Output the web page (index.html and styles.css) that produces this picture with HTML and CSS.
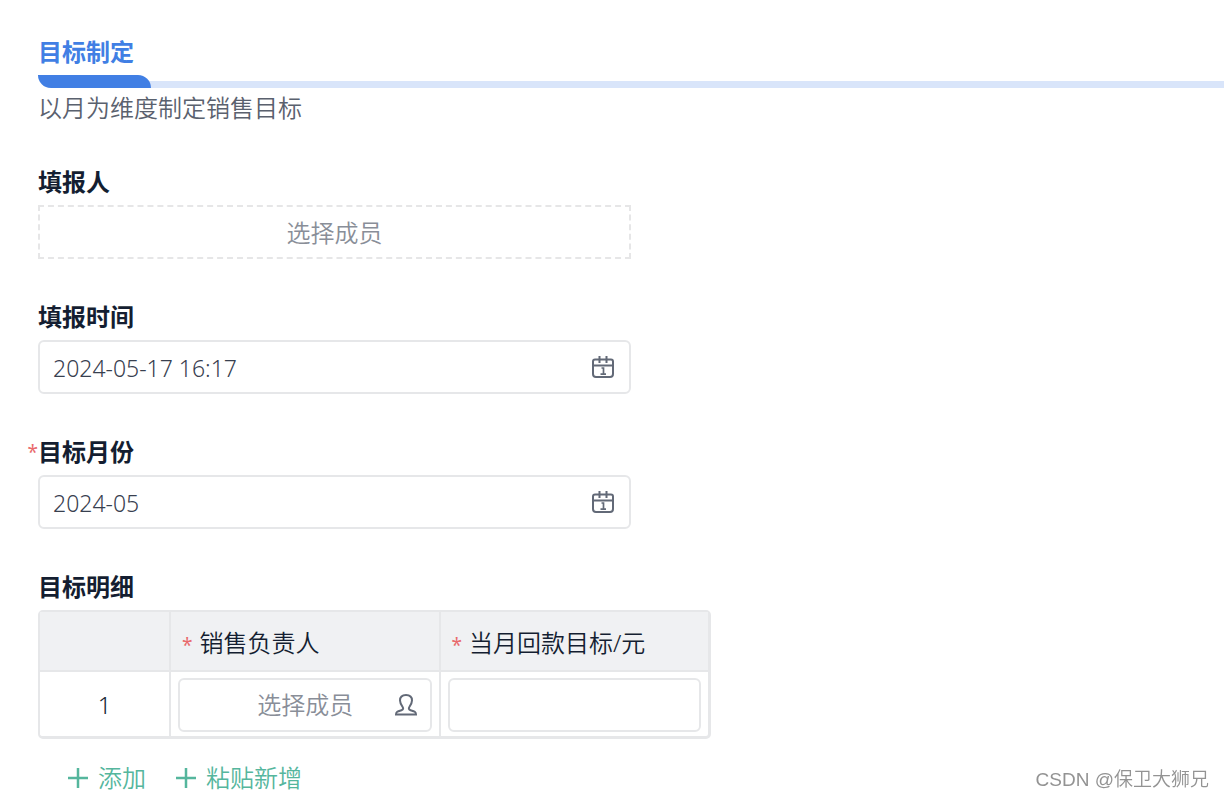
FILE: index.html
```html
<!DOCTYPE html>
<html lang="zh-CN">
<head>
<meta charset="UTF-8">
<meta name="viewport" content="width=device-width, initial-scale=1">
<title>目标制定</title>
<link rel="stylesheet" href="styles.css">
</head>
<body>
<svg class="sprite" aria-hidden="true">
  <symbol id="calendar" viewBox="0 0 24 24">
    <path d="M4 4.500h16q2 0 2 2v12.500q0 3-3 3h-14q-3 0-3-3v-12.500q0-2 2-2zM2 10.500h20M8.500 1v7M15.500 1v7" stroke-width="2"/>
    <path d="M10.500 13h2v6M9.500 19.200h5.500" stroke-width="1.700"/>
  </symbol>
  <symbol id="person" viewBox="0 0 24 24">
    <path d="M2 21.500c0-3 2-3.300 5.500-4.300 2-.6 2-2 1-3.500C7 11.500 6 9.500 6 7.500 6 4 8.300 2 12 2s6 2 6 5.500c0 2-1 4-2.500 6.200-1 1.500-1 2.900 1 3.500 3.500 1 5.500 1.300 5.500 4.300z" stroke-width="2"/>
  </symbol>
  <symbol id="plus" viewBox="0 0 22 22">
    <path d="M11 1v20M1 11h20" stroke-width="2.500"/>
  </symbol>
</svg>
<main class="form">
  <header class="section">
    <h1 class="section-title">目标制定</h1>
    <div class="section-rule"><span class="section-tab"></span></div>
    <p class="section-note">以月为维度制定销售目标</p>
  </header>

  <div class="field">
    <span class="label" id="reporter-label">填报人</span>
    <button class="picker" type="button" aria-describedby="reporter-label">选择成员</button>
  </div>

  <div class="field">
    <label class="label" for="report-time">填报时间</label>
    <div class="control">
      <input class="control-input" id="report-time" type="text" value="2024-05-17 16:17">
      <svg class="icon"><use href="#calendar"/></svg>
    </div>
  </div>

  <div class="field">
    <label class="label" for="target-month"><span class="star star-label">*</span>目标月份</label>
    <div class="control">
      <input class="control-input" id="target-month" type="text" value="2024-05">
      <svg class="icon"><use href="#calendar"/></svg>
    </div>
  </div>

  <section class="details">
    <h2 class="label">目标明细</h2>
    <table class="grid">
      <thead>
        <tr>
          <th class="col-index"></th>
          <th id="owner-head"><span class="star">*</span>销售负责人</th>
          <th id="amount-head"><span class="star">*</span>当月回款目标/元</th>
        </tr>
      </thead>
      <tbody>
        <tr>
          <td class="col-index">1</td>
          <td>
            <button class="control member" type="button" aria-describedby="owner-head">
              <span class="member-text">选择成员</span>
              <svg class="icon"><use href="#person"/></svg>
            </button>
          </td>
          <td><div class="control"><input class="control-input" type="text" aria-labelledby="amount-head"></div></td>
        </tr>
      </tbody>
    </table>
    <div class="actions">
      <button class="action" type="button"><svg class="plus"><use href="#plus"/></svg>添加</button>
      <button class="action" type="button"><svg class="plus"><use href="#plus"/></svg>粘贴新增</button>
    </div>
  </section>
</main>
<div class="watermark">CSDN @保卫大狮兄</div>
</body>
</html>
```
FILE: styles.css
```css
* {
  box-sizing: border-box;
}

body {
  margin: 0;
  background: #fff;
  color: #141e31;
  font: 350 24px/32px "Noto Sans", "Noto Sans CJK SC", sans-serif;
}

button,
input {
  font: inherit;
  color: inherit;
}

.sprite {
  display: none;
}

.form {
  padding: 36px 0 0 38px;
}

.section {
  margin-bottom: 42px;
}

.section-title,
.section-note {
  margin: 0;
  line-height: 32px;
}

.section-title {
  color: #417fe4;
  font-size: 24px;
  font-weight: 700;
}

.section-rule {
  display: flex;
  height: 13px;
  margin-top: 7px;
  border-bottom-left-radius: 13px;
  background: linear-gradient(#d9e5fa, #d9e5fa) bottom / 100% 7px no-repeat;
}

.section-tab {
  width: 113px;
  border-radius: 0 13px 0 13px;
  background: #417fe4;
}

.section-note {
  margin-top: 4px;
  color: #5a616e;
}

.field {
  width: 50%;
  margin-bottom: 42px;
}

.label {
  display: block;
  position: relative;
  margin: 0 0 7px;
  font-size: 24px;
  font-weight: 700;
  line-height: 32px;
}

.star {
  margin-right: 7px;
  color: #e9696c;
  font-size: 19px;
  font-weight: 400;
}

.star-label {
  position: absolute;
  right: 100%;
  margin: 0;
}

.picker {
  display: block;
  width: 100%;
  height: 54px;
  padding: 2px 0 0;
  border: 2px dashed #e6e6e7;
  background: none;
  color: #898e98;
}

.control {
  display: flex;
  align-items: center;
  width: 100%;
  height: 54px;
  padding: 0 14px 0 13px;
  border: 2px solid #e6e7e9;
  border-radius: 6px;
  background: #fff;
}

.control-input {
  flex: 1;
  min-width: 0;
  padding: 2px 0 0;
  border: 0;
  outline: 0;
  background: none;
  color: #38404f;
  font-size: 23px;
}

.icon {
  flex: none;
  width: 24px;
  height: 24px;
  fill: none;
  stroke: #626977;
}

.grid {
  width: 673px;
  max-width: 100%;
  table-layout: fixed;
  border: 2px solid #e6e7e9;
  border-right-width: 3px;
  border-bottom-width: 3px;
  border-radius: 5px;
  border-collapse: separate;
  border-spacing: 0;
}

.grid th {
  height: 60px;
  padding: 6px 11px 0;
  border-bottom: 2px solid #e6e7e9;
  background: #f0f1f3;
  font-weight: 350;
  text-align: left;
}

.grid td {
  height: 64px;
  padding: 6px 7px 4px;
}

.grid th + th,
.grid td + td {
  border-left: 2px solid #e6e7e9;
}

.grid .col-index {
  width: 129px;
  text-align: center;
}

.member {
  padding-right: 12px;
  color: #898e98;
}

.member-text {
  flex: 1;
  padding-left: 24px;
}

.actions {
  display: flex;
  gap: 29px;
  padding: 23px 0 0 29px;
}

.action {
  display: flex;
  align-items: center;
  gap: 9px;
  padding: 0;
  border: 0;
  background: none;
  color: #55b69d;
}

.plus {
  width: 22px;
  height: 22px;
  fill: none;
  stroke: #55b69d;
}

.watermark {
  position: fixed;
  right: 15px;
  bottom: 3px;
  color: #939393;
  font: 350 19px/30px "Liberation Sans", "Noto Sans CJK SC", sans-serif;
}
```
